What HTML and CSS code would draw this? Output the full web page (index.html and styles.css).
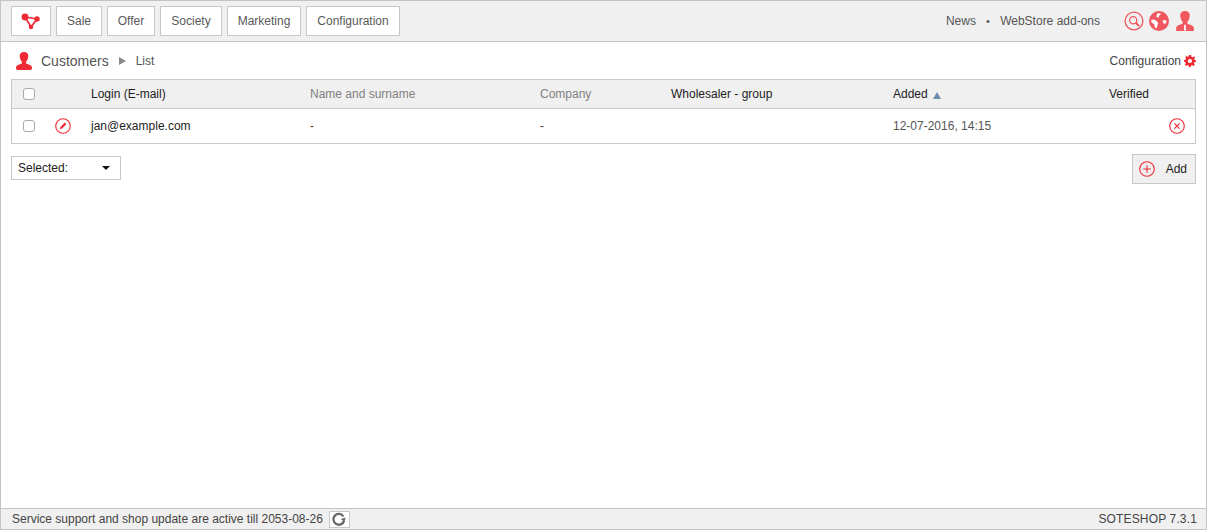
FILE: index.html
```html
<!DOCTYPE html>
<html lang="en">
<head>
<meta charset="utf-8">
<title>Customers</title>
<link rel="stylesheet" href="styles.css">
</head>
<body>
<div class="app">
  <header class="topbar">
    <nav class="mainnav">
      <a class="navbtn logo"><svg width="20" height="17" viewBox="0 0 20 17"><path d="M4 4 L16 6 L10 14 Z" fill="none" stroke="#ee2a35" stroke-width="1.7"/><circle cx="4" cy="4" r="3.4" fill="#ee2a35"/><circle cx="16" cy="6" r="2.7" fill="#ee2a35"/><circle cx="10" cy="14" r="2.2" fill="#ee2a35"/></svg></a>
      <a class="navbtn">Sale</a>
      <a class="navbtn">Offer</a>
      <a class="navbtn">Society</a>
      <a class="navbtn">Marketing</a>
      <a class="navbtn">Configuration</a>
    </nav>
    <div class="toplinks">
      <a>News</a><span class="dot">•</span><a>WebStore add-ons</a>
    </div>
    <div class="topicons">
      <svg width="20" height="20" viewBox="0 0 20 20"><circle cx="10" cy="10" r="8.9" fill="none" stroke="#f0575f" stroke-width="1.3"/><circle cx="9.2" cy="9.2" r="3.6" fill="none" stroke="#f0575f" stroke-width="1.3"/><path d="M11.8 11.8 L15 15" stroke="#f0575f" stroke-width="2"/></svg>
      <svg width="20" height="20" viewBox="0 0 20 20"><circle cx="10" cy="10" r="10" fill="#f0575f"/><path d="M8.4 2.2 L12 2.4 L11.2 4 L9.8 4.8 L10 6.2 L8.6 6.6 L7.2 5.4 Z M2 9 L5 8.6 L7.8 10.2 L9.2 12 L8.4 14.4 L7.4 17.4 L5.8 16.4 L5.4 13.4 L2.6 11.4 Z M13.4 9.4 L15.8 9 L17.8 10 L16.2 13 L14.6 12.6 Z" fill="#fff"/></svg>
      <svg class="usertop" width="18" height="20" viewBox="0 0 16 18"><path d="M8 0 C11 0 12.5 2 12.3 4.5 C12 7 11 8.8 10 10 L10.2 11.5 C13 12.5 15.6 13 15.9 15 L16 18 L0 18 L0.1 15 C0.4 13 3 12.5 5.8 11.5 L6 10 C5 8.8 4 7 3.7 4.5 C3.5 2 5 0 8 0 Z" fill="#f0575f"/><path d="M7.3 12.3 H8.7 L8.9 17.5 H7.1 Z" fill="#fff"/></svg>
    </div>
  </header>

  <main class="content">
    <div class="pagehead">
      <svg class="pageicon" width="16" height="18" viewBox="0 0 16 18"><path d="M8 0 C11 0 12.5 2 12.3 4.5 C12 7 11 8.8 10 10 L10.2 11.5 C13 12.5 15.6 13 15.9 15 L16 16.5 C16 17.5 14.5 18 13 18 L3 18 C1.5 18 0 17.5 0 16.5 L0.1 15 C0.4 13 3 12.5 5.8 11.5 L6 10 C5 8.8 4 7 3.7 4.5 C3.5 2 5 0 8 0 Z" fill="#ee2a35"/></svg>
      <span class="crumb">Customers</span>
      <span class="crumbsep"></span>
      <span class="crumbsub">List</span>
      <a class="pageconfig">Configuration
        <svg width="12" height="12" viewBox="0 0 13 13"><path d="M5.3 0 H7.7 L8 1.8 L9.4 2.4 L10.9 1.3 L12 2.7 L11 4.2 L11.4 5.4 L13 5.6 V7.6 L11.3 7.9 L10.8 9.2 L11.7 10.7 L10.2 12 L8.8 11 L7.6 11.4 L7.3 13 H5.2 L4.9 11.3 L3.6 10.8 L2.2 11.8 L0.9 10.3 L1.9 8.9 L1.4 7.6 L0 7.4 V5.4 L1.6 5.1 L2.2 3.8 L1.2 2.4 L2.7 1 L4.1 2 L5.1 1.6 Z M6.5 4.2 A2.3 2.3 0 1 0 6.5 8.8 A2.3 2.3 0 1 0 6.5 4.2 Z" fill="#ee2a35" fill-rule="evenodd"/></svg>
      </a>
    </div>

    <div class="listtable">
      <div class="row headrow">
        <span class="cell"><input class="check" type="checkbox"></span>
        <span class="cell"></span>
        <span class="cell dark">Login (E-mail)</span>
        <span class="cell muted">Name and surname</span>
        <span class="cell muted">Company</span>
        <span class="cell dark">Wholesaler - group</span>
        <span class="cell dark">Added<i class="sortup"></i></span>
        <span class="cell dark">Verified</span>
      </div>
      <div class="row bodyrow">
        <span class="cell"><input class="check" type="checkbox"></span>
        <span class="cell"><svg width="16" height="16" viewBox="0 0 16 16"><circle cx="8" cy="8" r="7.3" fill="none" stroke="#ee2a35" stroke-width="1.1"/><path d="M9.8 4.6 L11.4 6.2 L7 10.6 L4.8 11.2 L5.4 9 Z" fill="#ee2a35"/></svg></span>
        <span class="cell dark">jan@example.com</span>
        <span class="cell dash">-</span>
        <span class="cell dash">-</span>
        <span class="cell"></span>
        <span class="cell">12-07-2016, 14:15</span>
        <span class="cell endcell"><svg width="16" height="16" viewBox="0 0 16 16"><circle cx="8" cy="8" r="7.3" fill="none" stroke="#ee2a35" stroke-width="1.1"/><path d="M5.4 5.4 L10.6 10.6 M10.6 5.4 L5.4 10.6" stroke="#ee2a35" stroke-width="1.2"/></svg></span>
      </div>
    </div>

    <div class="actions">
      <div class="selectbox"><span>Selected:</span><i class="caret"></i></div>
      <a class="addbtn"><svg width="16" height="16" viewBox="0 0 16 16"><circle cx="8" cy="8" r="7.3" fill="none" stroke="#ee2a35" stroke-width="1.1"/><path d="M8 4.2 V11.8 M4.2 8 H11.8" stroke="#ee2a35" stroke-width="1.1"/></svg><span>Add</span></a>
    </div>
  </main>

  <footer class="statusbar">
    <span>Service support and shop update are active till 2053-08-26</span>
    <a class="refresh"><svg width="14" height="14" viewBox="0 0 13 13"><path d="M10.6 4.2 A5 5 0 1 0 11.2 8" fill="none" stroke="#666" stroke-width="2.1"/><path d="M12.8 5.2 L11.4 8.8 L8.2 6.4 Z" fill="#666"/></svg></a>
    <span class="version">SOTESHOP 7.3.1</span>
  </footer>
</div>
</body>
</html>
```
FILE: styles.css
```css
* { box-sizing: border-box; }
html, body { margin: 0; height: 100%; }
body { font-family: "Liberation Sans", Arial, sans-serif; font-size: 12px; color: #555; background: #fff; }
.app { width: 1207px; height: 530px; border: 1px solid #c4c4c4; display: flex; flex-direction: column; }
.topbar { height: 41px; flex: none; background: #f0f0f0; border-bottom: 1px solid #c4c4c4; display: flex; align-items: flex-start; padding: 5px 0 0 10px; }
.mainnav { display: grid; grid-template-columns: 40px 46px 48px 62px 74px 94px; gap: 5px; }
.navbtn { height: 30px; background: #fff; border: 1px solid #c8c8c8; display: flex; align-items: center; justify-content: center; color: #595959; white-space: nowrap; }
.toplinks { margin-left: auto; height: 30px; display: flex; align-items: center; color: #555; }
.dot { margin: 0 10.2px; font-size: 11px; }
.topicons { width: 71px; margin-left: 24px; margin-right: 11px; display: flex; gap: 5px; align-items: flex-start; padding-top: 5px; }
.usertop { margin-left: 2px; }
.content { flex: 1; padding: 0 10px; display: flex; flex-direction: column; }
.pagehead { height: 37px; flex: none; display: flex; align-items: center; padding: 0 0 0 5px; }
.pageicon { margin-right: 9px; }
.crumb { font-size: 14px; color: #555; }
.crumbsep { width: 0; height: 0; margin: 1px 10px 0 10px; border-left: 7px solid #888; border-top: 4px solid transparent; border-bottom: 4px solid transparent; }
.crumbsub { color: #555; }
.pageconfig { margin-left: auto; display: flex; align-items: center; gap: 3px; color: #444; }
.listtable { border: 1px solid #c8c8c8; flex: none; }
.row { display: grid; grid-template-columns: 43px 36px 219px 230px 131px 222px 216px 1fr; align-items: center; }
.headrow { height: 29px; background: #f0f0f0; border-bottom: 1px solid #c8c8c8; }
.bodyrow { height: 34px; }
.cell { display: flex; align-items: center; white-space: nowrap; color: #555; }
.cell:first-child { padding-left: 11px; }
.dark { color: #1d1d1d; }
.muted { color: #808080; }
.dash { color: #5a3a2a; }
.check { appearance: none; width: 12px; height: 12px; margin: 0; background: #fff; border: 1px solid #aaa; border-radius: 3px; }
.endcell { justify-content: flex-end; padding-right: 10px; }
.sortup { width: 0; height: 0; margin-left: 5px; margin-top: 2px; border-bottom: 7px solid #6d8db0; border-left: 4px solid transparent; border-right: 4px solid transparent; }
.actions { display: flex; justify-content: space-between; align-items: flex-start; padding-top: 10px; }
.selectbox { width: 110px; height: 24px; margin-top: 2px; background: #fff; border: 1px solid #c8c8c8; display: flex; align-items: center; justify-content: space-between; padding: 0 10px 0 6px; color: #222; }
.caret { width: 0; height: 0; border-top: 4px solid #111; border-left: 4px solid transparent; border-right: 4px solid transparent; }
.addbtn { width: 64px; height: 30px; background: #f0f0f0; border: 1px solid #c8c8c8; display: flex; align-items: center; justify-content: space-between; padding: 0 8px 0 6px; color: #222; }
.statusbar { height: 21px; flex: none; background: #f0f0f0; border-top: 1px solid #c4c4c4; display: flex; align-items: center; padding: 0 9px 0 11px; color: #444; }
.refresh { width: 21px; height: 17px; margin-left: 6px; background: #fff; border: 1px solid #c8c8c8; display: flex; align-items: center; justify-content: center; }
.version { margin-left: auto; color: #444; letter-spacing: 0.15px; }
```
